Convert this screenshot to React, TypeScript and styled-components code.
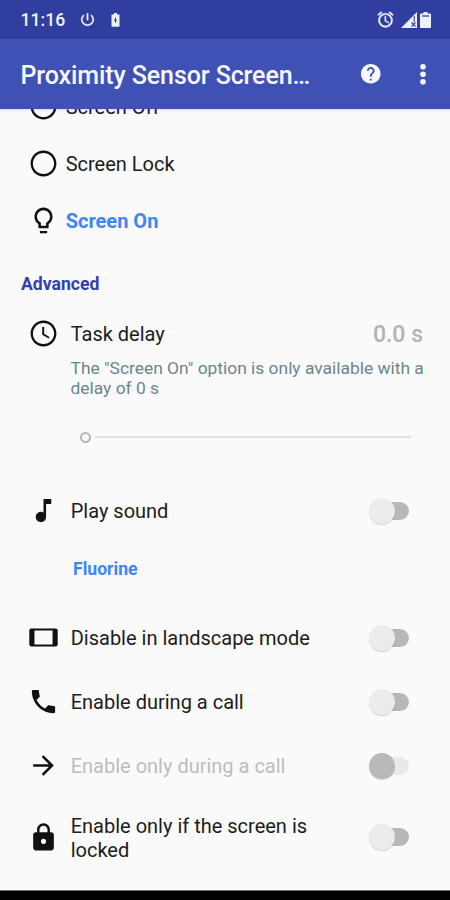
import React from "react";
import styled, { createGlobalStyle } from "styled-components";

const GlobalStyle = createGlobalStyle`
  * { box-sizing: border-box; }
  body { margin: 0; background: #fafafa; font-family: Roboto, sans-serif; }
`;

const Screen = styled.div`
  width: 450px;
  height: 900px;
  display: flex;
  flex-direction: column;
  overflow: hidden;
  background: #fafafa;
  color: #1c1c1c;
`;

const StatusBar = styled.div`
  height: 39px;
  flex: none;
  display: flex;
  align-items: center;
  padding: 0 19px 0 20.5px;
  background: #303f9f;
  color: #eef0fb;
`;

const Time = styled.span`
  width: 58px;
  font-size: 17.6px;
  font-weight: 500;
  line-height: 20px;
`;

const StatusGroup = styled.div<{ $gap: number; $end?: boolean }>`
  display: flex;
  align-items: center;
  gap: ${(p) => p.$gap}px;
  margin-left: ${(p) => (p.$end ? "auto" : "0")};
`;

const AppBar = styled.header`
  height: 70px;
  flex: none;
  display: flex;
  align-items: center;
  padding: 0 19px 0 20.5px;
  background: #3f51b5;
  color: #f7f8ff;
`;

const Title = styled.h1`
  flex: 1;
  margin: 0;
  padding-top: 3px;
  font-size: 25px;
  line-height: 30px;
  font-weight: 500;
  letter-spacing: -0.1px;
  white-space: nowrap;
`;

const AppBarActions = styled.div`
  display: flex;
  align-items: center;
  gap: 32.5px;
`;

const Content = styled.main`
  flex: 1;
  min-height: 0;
  overflow: hidden;
  box-shadow: inset 0 2px 2px -1px rgba(0, 0, 0, 0.12);
`;

const ScrolledList = styled.div`
  margin-top: -31px;
`;

const Row = styled.div<{ $height: number }>`
  height: ${(p) => p.$height}px;
  display: flex;
  align-items: center;
  padding: 0 27px 0 27.5px;
`;

const IconSlot = styled.div<{ $gap: number }>`
  width: 31px;
  height: 31px;
  flex: none;
  margin-right: ${(p) => p.$gap}px;
  color: #111;
  svg { display: block; }
`;

const Label = styled.div<{ $tone?: "active" | "disabled" }>`
  max-width: 264px;
  padding-top: 1px;
  font-size: 20px;
  line-height: 24px;
  font-weight: ${(p) => (p.$tone === "active" ? 700 : 400)};
  color: ${(p) => (p.$tone === "active" ? "#3d86f7" : p.$tone === "disabled" ? "#bdbdbd" : "#1c1c1c")};
`;

const SectionTitle = styled.h2`
  margin: 0;
  height: 70px;
  padding: 0 21px;
  font-size: 17.6px;
  line-height: 70px;
  font-weight: 700;
  color: #3140b0;
`;

const DelayValue = styled.div`
  margin-left: auto;
  padding-top: 3px;
  font-size: 23px;
  line-height: 28px;
  font-weight: 500;
  color: #b3b3b3;
`;

const Hint = styled.p`
  margin: 0;
  padding: 11px 20px 0 70.5px;
  height: 72px;
  font-size: 17.4px;
  line-height: 20.4px;
  color: #6a858f;
`;

const Slider = styled.div`
  height: 36px;
  margin: 0 39px 23px 80px;
  display: flex;
  align-items: center;
  gap: 4px;
`;

const SliderThumb = styled.div`
  width: 11px;
  height: 11px;
  border: 2px solid #b5b5b5;
  border-radius: 50%;
`;

const SliderTrack = styled.div`
  flex: 1;
  height: 2px;
  background: #e0e0e0;
`;

const SoundName = styled.div`
  height: 52px;
  margin-bottom: 10.5px;
  padding-left: 73px;
  font-size: 17.6px;
  line-height: 52px;
  font-weight: 700;
  color: #3d86f7;
`;

const SwitchTrack = styled.div<{ $disabled?: boolean }>`
  width: 38px;
  height: 18px;
  flex: none;
  display: flex;
  align-items: center;
  margin-left: auto;
  margin-right: 14px;
  border-radius: 9px;
  background: ${(p) => (p.$disabled ? "#e9e9e9" : "#b8b8b8")};
`;

const SwitchThumb = styled.div<{ $disabled?: boolean }>`
  width: 26px;
  height: 26px;
  flex: none;
  margin-left: -2px;
  border-radius: 50%;
  background: ${(p) => (p.$disabled ? "#b9b9b9" : "#ececec")};
  box-shadow: 0 1px 1px rgba(0, 0, 0, 0.16);
`;

const NavigationBar = styled.div`
  height: 10px;
  flex: none;
  border-top: 1px solid #707070;
  background: #000;
`;

const paths = {
  circle: "M12 2C6.48 2 2 6.48 2 12s4.48 10 10 10 10-4.48 10-10S17.52 2 12 2zm0 18.2c-4.53 0-8.2-3.67-8.2-8.2S7.47 3.8 12 3.8s8.2 3.67 8.2 8.2-3.67 8.2-8.2 8.2z",
  bulb: "M9.2 20.2h5.6v1.7H9.2v-1.7zM12 2C8.14 2 5 5.14 5 9c0 2.38 1.19 4.47 3 5.74V17c0 .55.45 1 1 1h6c.55 0 1-.45 1-1v-2.26c1.81-1.27 3-3.36 3-5.74 0-3.86-3.14-7-7-7zm2.85 11.1l-.85.6V16h-4v-2.3l-.85-.6C7.8 12.16 7 10.63 7 9c0-2.76 2.24-5 5-5s5 2.24 5 5c0 1.63-.8 3.16-2.15 4.1z",
  clock: "M12 2C6.48 2 2 6.48 2 12s4.48 10 10 10 10-4.48 10-10S17.52 2 12 2zm0 18.2c-4.53 0-8.2-3.67-8.2-8.2S7.47 3.8 12 3.8s8.2 3.67 8.2 8.2-3.67 8.2-8.2 8.2zM11 7h1.5v5.2l4.2 2.5-.75 1.25L11 13z",
  note: "M12 3v10.55c-.59-.34-1.27-.55-2-.55-2.21 0-4 1.79-4 4s1.79 4 4 4 4-1.79 4-4V7h4V3h-6z",
  tablet: "M21.5 5h-19C1.7 5 1 5.7 1 6.5v11c0 .8.7 1.5 1.5 1.5h19c.8 0 1.5-.7 1.5-1.5v-11c0-.8-.7-1.5-1.5-1.5zM19 17.4H5V6.6h14v10.8z",
  phone: "M6.62 10.79c1.44 2.83 3.76 5.14 6.59 6.59l2.2-2.2c.27-.27.67-.36 1.02-.24 1.12.37 2.33.57 3.57.57.55 0 1 .45 1 1V20c0 .55-.45 1-1 1-9.39 0-17-7.61-17-17 0-.55.45-1 1-1h3.5c.55 0 1 .45 1 1 0 1.25.2 2.45.57 3.57.11.35.03.74-.25 1.02l-2.2 2.2z",
  arrow: "M12 4l-1.41 1.41L16.17 11H4v2h12.17l-5.58 5.59L12 20l8-8z",
  lock: "M18 8h-1V6c0-2.76-2.24-5-5-5S7 3.24 7 6v2H6c-1.1 0-2 .9-2 2v10c0 1.1.9 2 2 2h12c1.1 0 2-.9 2-2V10c0-1.1-.9-2-2-2zm-6 9c-1.1 0-2-.9-2-2s.9-2 2-2 2 .9 2 2-.9 2-2 2zm3.1-9H8.9V6c0-1.71 1.39-3.1 3.1-3.1 1.71 0 3.1 1.39 3.1 3.1v2z",
  help: "M12 2C6.48 2 2 6.48 2 12s4.48 10 10 10 10-4.48 10-10S17.52 2 12 2zm1 17h-2v-2h2v2zm2.07-7.75l-.9.92C13.45 12.9 13 13.5 13 15h-2v-.5c0-1.1.45-2.1 1.17-2.83l1.24-1.26c.37-.36.59-.86.59-1.41 0-1.1-.9-2-2-2s-2 .9-2 2H8c0-2.21 1.79-4 4-4s4 1.79 4 4c0 .88-.36 1.68-.93 2.25z",
  power: "M13 3h-2v10h2V3zm4.83 2.17l-1.42 1.42C17.99 7.86 19 9.81 19 12c0 3.87-3.13 7-7 7s-7-3.13-7-7c0-2.19 1.01-4.14 2.58-5.42L6.17 5.17C4.23 6.82 3 9.26 3 12c0 4.97 4.03 9 9 9s9-4.03 9-9c0-2.74-1.23-5.18-3.17-6.83z",
  alarm: "M22 5.72l-4.6-3.86-1.29 1.53 4.6 3.86L22 5.72zM7.88 3.39L6.6 1.86 2 5.71l1.29 1.53 4.59-3.85zM12.5 8H11v6l4.75 2.85.75-1.23-4-2.37V8zM12 4c-4.97 0-9 4.03-9 9s4.02 9 9 9c4.97 0 9-4.03 9-9s-4.03-9-9-9zm0 16c-3.87 0-7-3.13-7-7s3.13-7 7-7 7 3.13 7 7-3.13 7-7 7z",
};

type IconName = keyof typeof paths;

function Icon({ name, size = 31, weight = 0 }: { name: IconName; size?: number; weight?: number }) {
  return (
    <svg width={size} height={size} viewBox="0 0 24 24" fill="currentColor" stroke="currentColor" strokeWidth={weight}>
      <path d={paths[name]} />
    </svg>
  );
}

function Switch({ disabled }: { disabled?: boolean }) {
  return (
    <SwitchTrack $disabled={disabled}>
      <SwitchThumb $disabled={disabled} />
    </SwitchTrack>
  );
}

function OptionRow({ icon, label, active }: { icon: IconName; label: string; active?: boolean }) {
  return (
    <Row $height={57}>
      <IconSlot $gap={7.2}><Icon name={icon} /></IconSlot>
      <Label $tone={active ? "active" : undefined}>{label}</Label>
    </Row>
  );
}

function ToggleRow({ icon, label, height, disabled }: { icon: IconName; label: string; height: number; disabled?: boolean }) {
  return (
    <Row $height={height}>
      <IconSlot $gap={12.2}><Icon name={icon} /></IconSlot>
      <Label $tone={disabled ? "disabled" : undefined}>{label}</Label>
      <Switch disabled={disabled} />
    </Row>
  );
}

export default function App() {
  return (
    <Screen>
      <GlobalStyle />
      <StatusBar>
        <Time>11:16</Time>
        <StatusGroup $gap={15}>
          <Icon name="power" size={17} weight={0.4} />
          <svg width="9" height="14" viewBox="0 0 9 14">
            <path d="M3 0h3v1.5h2.5V13q0 .8-.8.8H1.3q-.8 0-.8-.8V1.5H3z" fill="currentColor" />
            <path d="M5 4L2.8 7.6H4v3l2.2-3.8H5z" fill="#303f9f" />
          </svg>
        </StatusGroup>
        <StatusGroup $gap={6.5} $end>
          <Icon name="alarm" size={19} weight={0.4} />
          <StatusGroup $gap={3}>
            <svg width="16" height="16" viewBox="0 0 16 16">
              <path d="M0 16L16 0v16z" fill="currentColor" />
              <path d="M13.2 4v6M10.5 10.5l4 4M14.5 10.5l-4 4" stroke="#303f9f" strokeWidth="1.1" />
            </svg>
            <svg width="11" height="16" viewBox="0 0 11 16">
              <path d="M3.5 0h4v1.5H10q1 0 1 1V15q0 1-1 1H1q-1 0-1-1V2.5q0-1 1-1h2.5z" fill="currentColor" />
              <path d="M2 4h7" stroke="#303f9f" strokeWidth="1.3" />
            </svg>
          </StatusGroup>
        </StatusGroup>
      </StatusBar>
      <AppBar>
        <Title>Proximity Sensor Screen…</Title>
        <AppBarActions>
          <Icon name="help" size={23.5} />
          <svg width="16" height="24" viewBox="0 0 16 24" fill="currentColor">
            <circle cx="8" cy="4.7" r="2.8" />
            <circle cx="8" cy="12.2" r="2.8" />
            <circle cx="8" cy="19.7" r="2.8" />
          </svg>
        </AppBarActions>
      </AppBar>
      <Content>
        <ScrolledList>
          <OptionRow icon="circle" label="Screen Off" />
          <OptionRow icon="circle" label="Screen Lock" />
          <OptionRow icon="bulb" label="Screen On" active />
          <SectionTitle>Advanced</SectionTitle>
          <Row $height={28}>
            <IconSlot $gap={12.2}><Icon name="clock" /></IconSlot>
            <Label>Task delay</Label>
            <DelayValue>0.0 s</DelayValue>
          </Row>
          <Hint>The "Screen On" option is only available with a delay of 0 s</Hint>
          <Slider>
            <SliderThumb />
            <SliderTrack />
          </Slider>
          <ToggleRow icon="note" label="Play sound" height={65} />
          <SoundName>Fluorine</SoundName>
          <ToggleRow icon="tablet" label="Disable in landscape mode" height={64} />
          <ToggleRow icon="phone" label="Enable during a call" height={64} />
          <ToggleRow icon="arrow" label="Enable only during a call" height={64} disabled />
          <ToggleRow icon="lock" label="Enable only if the screen is locked" height={79} />
        </ScrolledList>
      </Content>
      <NavigationBar />
    </Screen>
  );
}
